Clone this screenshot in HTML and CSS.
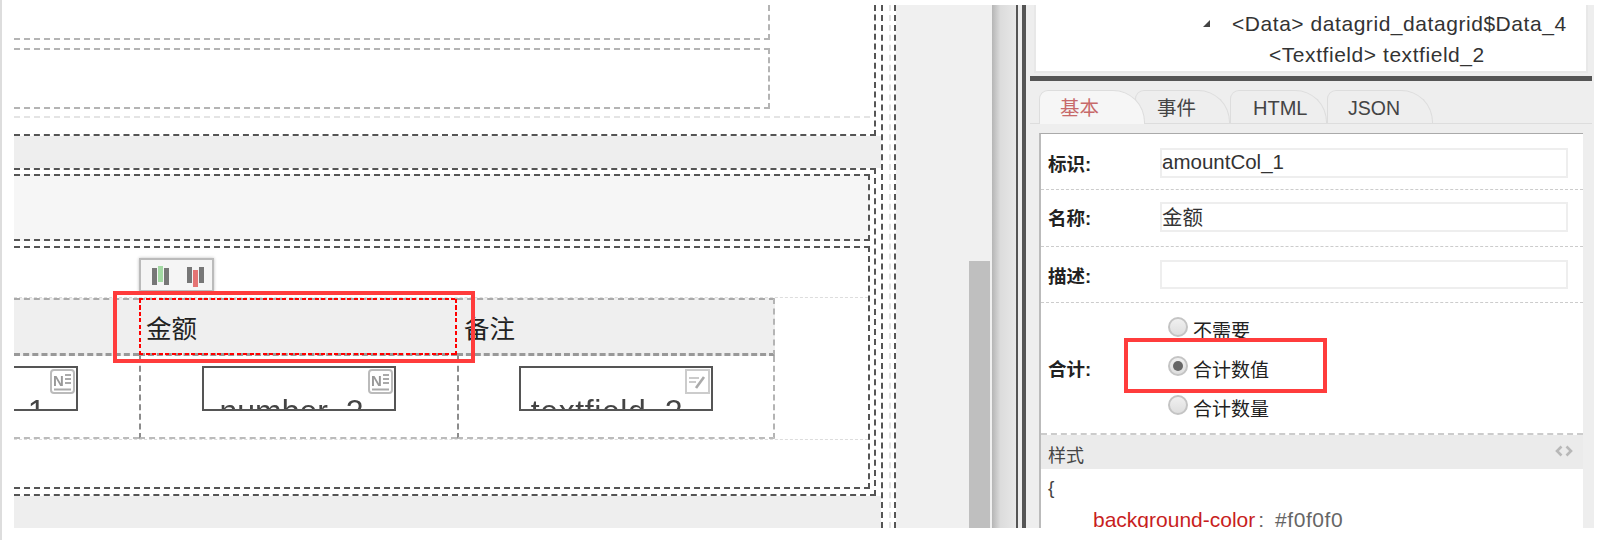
FILE: index.html
```html
<!DOCTYPE html>
<html lang="zh">
<head>
<meta charset="utf-8">
<title>Designer</title>
<link rel="stylesheet" href="styles.css">
</head>
<body>
<div class="stage">
  <div class="frame">
    <div class="margin-left"></div>
    <div class="canvas">
      <div class="main">
        <div class="top-block">
          <div class="box box-a"></div>
          <div class="box box-b"></div>
          <div class="ghost"></div>
        </div>
        <div class="band"></div>
        <div class="outer">
          <div class="inner inner-title"></div>
          <div class="inner inner-body">
            <div class="grid">
              <div class="table">
                <div class="hcell"></div>
                <div class="hcell selected">金额</div>
                <div class="hcell">备注</div>
                <div class="cell cell-first">
                  <div class="field"><span class="field-text">number_1</span>
                    <svg class="field-icon" viewBox="0 0 25 25"><rect x="1" y="1" width="23" height="23" rx="3" fill="#fff" stroke="#bbb" stroke-width="2"/><text x="3" y="17" class="n-glyph">N</text><path d="M15 6h6M15 10h6M15 14h6M4 20.500h17" stroke="#aaa" stroke-width="1.800" fill="none"/></svg>
                  </div>
                </div>
                <div class="cell">
                  <div class="field"><span class="field-text">number_2</span>
                    <svg class="field-icon" viewBox="0 0 25 25"><rect x="1" y="1" width="23" height="23" rx="3" fill="#fff" stroke="#bbb" stroke-width="2"/><text x="3" y="17" class="n-glyph">N</text><path d="M15 6h6M15 10h6M15 14h6M4 20.500h17" stroke="#aaa" stroke-width="1.800" fill="none"/></svg>
                  </div>
                </div>
                <div class="cell">
                  <div class="field"><span class="field-text field-text-wide">textfield_2</span>
                    <svg class="field-icon" viewBox="0 0 25 25"><rect x="1" y="1" width="23" height="23" fill="#fff" stroke="#ccc" stroke-width="2"/><path d="M4 9h10M4 13h7" stroke="#bbb" stroke-width="1.600" fill="none"/><path d="M11 19L19 8" stroke="#aaa" stroke-width="2.600" fill="none"/></svg>
                  </div>
                </div>
              </div>
            </div>
          </div>
        </div>
        <div class="band"></div>
      </div>
      <div class="rail"></div>
    </div>
    <div class="pane"><div class="thumb"></div></div>
    <div class="shade"></div>
    <div class="rule"></div>
    <div class="side">
      <div class="tree">
        <div class="tree-line tree-data"><span class="tri"></span>&lt;Data&gt; datagrid_datagrid$Data_4</div>
        <div class="tree-line tree-field">&lt;Textfield&gt; textfield_2</div>
      </div>
      <div class="bar"></div>
      <div class="tabs">
        <div class="tab tab-on">基本</div>
        <div class="tab tab-2">事件</div>
        <div class="tab tab-3">HTML</div>
        <div class="tab tab-4">JSON</div>
      </div>
      <div class="panel">
        <div class="row row-1"><div class="label">标识:</div><div class="input">amountCol_1</div></div>
        <div class="row row-2"><div class="label">名称:</div><div class="input input-cjk">金额</div></div>
        <div class="row row-3"><div class="label">描述:</div><div class="input input-empty"></div></div>
        <div class="row row-4">
          <div class="label">合计:</div>
          <div class="radios">
            <div class="radio"><span class="dot"></span><span>不需要</span></div>
            <div class="radio"><span class="dot dot-on"></span><span>合计数值</span></div>
            <div class="radio"><span class="dot"></span><span>合计数量</span></div>
          </div>
        </div>
        <div class="style-head"><span class="style-title">样式</span>
          <svg class="code-toggle" viewBox="0 0 18 12"><path d="M6.500 1.500L2 6l4.500 4.500M11.500 1.500L16 6l-4.500 4.500" fill="none" stroke="#b8b8b8" stroke-width="2.600"/></svg>
        </div>
        <div class="code">
          <div>{</div>
          <div class="code-prop"><span class="prop">background-color</span><span class="val">: #f0f0f0</span></div>
        </div>
      </div>
    </div>
  </div>

  <div class="toolbar">
    <svg class="tool" viewBox="0 0 20 24"><rect x="1" y="4" width="5" height="17" fill="#777"/><rect x="7" y="2" width="5" height="16" fill="#a3d9a3"/><rect x="13" y="4" width="5" height="17" fill="#777"/></svg>
    <svg class="tool" viewBox="0 0 20 24"><rect x="1" y="3" width="5" height="16" fill="#777"/><rect x="7" y="6" width="5" height="17" fill="#e57373"/><rect x="13" y="3" width="5" height="16" fill="#777"/></svg>
  </div>
  <div class="mark mark-col"></div>
  <div class="mark mark-radio"></div>
</div>
</body>
</html>
```
FILE: styles.css
```css
* { box-sizing: border-box; }
html, body { margin: 0; padding: 0; background: #fff; }
body { font-family: "Liberation Sans", "Noto Sans CJK SC", sans-serif; color: #222; }

.stage { position: relative; width: 1608px; height: 540px; border-left: 2px solid #ddd; overflow: hidden; filter: blur(0.35px); }
.frame { display: flex; height: 523px; margin-top: 5px; overflow: hidden; }
.margin-left { width: 12px; flex: none; background: #fff; }

/* canvas */
.canvas { display: flex; flex: none; width: 882px; }
.main { width: 869px; flex: none; border-right: 2px dashed #555; }
.rail { width: 13px; flex: none; border-right: 2px dashed #555; }
.rail::before { content: ""; display: block; width: 6px; height: 100%; border-right: 2px dashed #e2e2e2; }

.top-block { width: 862px; height: 131px; border-right: 2px dashed #555; border-bottom: 2px dashed #555; }
.box { width: 756px; border-right: 2px dashed #b4b4b4; }
.box-a { height: 35px; border-bottom: 2px dashed #b4b4b4; }
.box-b { height: 61px; margin-top: 8px; border-top: 2px dashed #b4b4b4; border-bottom: 2px dashed #b4b4b4; }
.ghost { width: 856px; height: 2px; margin-top: 7px; border-bottom: 2px dashed #e4e4e4; }
.band { height: 32px; background: #eee; }

.outer { width: 862px; height: 328px; padding: 4px 0 5px; border: 2px dashed #555; border-width: 2px 2px 2px 0; }
.inner { width: 856px; border: 2px dashed #555; border-left: 0; }
.inner-title { height: 67px; background: #f6f6f6; }
.inner-body { height: 243px; margin-top: 5px; padding-top: 49px; }

.grid { height: 143px; border-top: 1px dashed #ddd; border-bottom: 1px dashed #ddd; }
.table { display: grid; grid-template-columns: 125px 318px 318px; grid-template-rows: 58px 83px; width: 761px; }
.hcell { position: relative; padding: 13px 0 0 7px; font-size: 25.500px; line-height: 32px; color: #222; background: #efefef; border-top: 2px dashed #aaa; border-bottom: 3px dashed #999; }
.hcell:nth-child(3) { border-right: 2px dashed #b4b4b4; }
.selected::after {
  content: ""; position: absolute; inset: -2px 0 -2px 0;
  background:
    repeating-linear-gradient(90deg, #f00 0 4px, transparent 4px 6.500px) 0 0 / 100% 2px no-repeat,
    repeating-linear-gradient(90deg, #f00 0 4px, transparent 4px 6.500px) 0 100% / 100% 2px no-repeat,
    repeating-linear-gradient(0deg, #f00 0 4px, transparent 4px 6.500px) 0 0 / 2px 100% no-repeat,
    repeating-linear-gradient(0deg, #f00 0 4px, transparent 4px 6.500px) 100% 0 / 2px 100% no-repeat;
}
.cell { display: flex; justify-content: center; padding-top: 10px; border-left: 2px dashed #8c8c8c; border-bottom: 2px dashed #bbb; overflow: hidden; }
.cell:nth-child(6) { border-right: 2px dashed #b4b4b4; }
.cell-first { justify-content: flex-end; padding-right: 61px; border-left: 0; }
.field { position: relative; flex: none; width: 194px; height: 45px; padding: 25px 15px 0 0; border: 2px solid #555; overflow: hidden; background: #fff; text-align: center; font-size: 32px; line-height: 36px; color: #444; white-space: nowrap; }
.field-text { display: inline-block; }
.field-text-wide { letter-spacing: 0.600px; margin-right: 3px; }
.field-icon { position: absolute; top: 1px; right: 1px; width: 25px; height: 25px; }
.n-glyph { font: bold 15px "Liberation Sans", sans-serif; fill: #999; }

/* middle pane */
.pane { display: flex; flex: none; width: 96px; align-items: flex-end; justify-content: flex-end; padding-right: 2px; background: #f0f0f0; }
.thumb { width: 21px; height: 267px; background: #bfbfbf; }
.shade { flex: none; width: 24px; background: linear-gradient(90deg, #b5b5b5, #dcdcdc 35%, #e8e8e8); }
.rule { flex: none; width: 6px; border-left: 2px solid #555; background: #eee; }

/* side */
.side { flex: none; display: flex; flex-direction: column; width: 572px; border-left: 4px solid #555; background: #eee; }
.tree { flex: none; width: 554px; height: 68px; margin-left: 8px; border: 2px solid #e8e8e8; border-top: 0; background: #fff; font-size: 21px; letter-spacing: 0.550px; color: #333; white-space: nowrap; }
.tree-line { display: flex; align-items: center; height: 31px; }
.tree-data { padding-left: 196px; margin-top: 3px; }
.tree-field { padding-left: 233px; }
.tri { width: 0; height: 0; margin: 0 22px 0 -29px; border-style: solid; border-width: 0 0 7px 7px; border-color: transparent transparent #444 transparent; }
.bar { flex: none; width: 562px; height: 5px; margin: 3px 0 0 4px; background: #555; }
.tabs { display: flex; flex: none; width: 562px; height: 34px; margin: 9px 0 0 4px; padding-left: 9px; border-bottom: 1px solid #ddd; }
.tab { height: 33px; padding-top: 3px; border: 1px solid #ddd; border-bottom: 0; border-radius: 9px 32px 0 0; background: #eee; font-size: 19.500px; line-height: 28px; color: #444; }
.tab-on { position: relative; z-index: 1; width: 106px; padding-left: 20px; background: #f6f6f6; color: #c76a6a; height: 34px; }
.tab-2 { width: 95px; margin-left: -10px; padding-left: 21px; }
.tab-3 { width: 97px; padding-left: 22px; font-size: 20px; }
.tab-4 { width: 106px; padding-left: 20px; }

.panel { flex: 1; width: 544px; margin: 9px 0 0 13px; border-top: 1px solid #aaa; border-left: 2px solid #bbb; background: #fff; overflow: hidden; }
.row { display: flex; align-items: center; border-bottom: 1px dashed #ccc; }
.row-1 { padding: 14px 0 11px; }
.row-2 { padding: 12px 0 14px; }
.row-3 { padding: 13px 0 13px; }
.row-4 { height: 132px; border-bottom: 2px dashed #ccc; }
.label { flex: none; width: 119px; padding-left: 7px; font-size: 18.500px; font-weight: bold; color: #222; }
.input { flex: none; width: 408px; height: 30px; padding-left: 0; border: 2px solid #eee; font-size: 20.500px; line-height: 24px; color: #333; }
.input-cjk { padding-top: 2px; }
.input-empty { height: 29px; }
.radios { display: flex; flex-direction: column; margin: 0 0 0 8px; padding-top: 1px; }
.radio { display: flex; align-items: center; gap: 5px; height: 39px; font-size: 19px; color: #222; }
.dot { flex: none; position: relative; width: 20px; height: 20px; margin-top: -5px; border: 2px solid #c4c4c4; border-radius: 50%; background: linear-gradient(#f0f0f0, #dedede); }
.dot-on::after { content: ""; position: absolute; left: 3px; top: 3px; width: 10px; height: 10px; border-radius: 50%; background: #666; }

.style-head { display: flex; justify-content: space-between; align-items: center; height: 34px; padding: 0 10px 0 7px; background: #ebebeb; font-size: 18px; color: #444; }
.style-title { padding-top: 3px; }
.code-toggle { width: 18px; height: 12px; margin-top: -2px; }
.code { padding: 3px 0 0 7px; font-size: 19px; line-height: 32px; color: #444; }
.code-prop { margin-left: 45px; white-space: nowrap; font-size: 21px; }
.prop { color: #c81e1e; }
.val { color: #666; padding-left: 3px; letter-spacing: 0.550px; word-spacing: 4px; }

/* overlays */
.toolbar { position: absolute; left: 137px; top: 258px; display: flex; gap: 15px; width: 75px; height: 34px; padding: 4px 0 0 10px; border: 2px solid #bbb; background: #f5f5f5; box-shadow: 0 0 3px rgba(0,0,0,.25); }
.tool { width: 20px; height: 24px; }
.mark { position: absolute; border: 4px solid #ff3c3c; }
.mark-col { left: 111px; top: 291px; width: 362px; height: 72px; }
.mark-radio { left: 1122px; top: 338px; width: 203px; height: 55px; }
```
